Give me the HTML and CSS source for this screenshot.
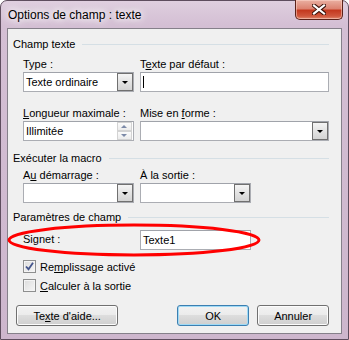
FILE: index.html
```html
<!DOCTYPE html>
<html lang="fr">

<head>
  <meta charset="UTF-8">
  <link rel="stylesheet" href="styles.css">
</head>

<body>
  <div class="window">
    <div class="titlebar">
      <span class="title">Options de champ : texte</span>
      <div class="close">
        <svg width="14" height="11" viewBox="0 0 14 11">
          <path d="M2 1.5 L12 9.5 M12 1.5 L2 9.5" stroke="#3a1008" stroke-width="4.2" stroke-linecap="square" fill="none" />
          <path d="M2 1.5 L12 9.5 M12 1.5 L2 9.5" stroke="#fff" stroke-width="2.2" stroke-linecap="square" fill="none" />
        </svg>
      </div>
    </div>

    <div class="client">
      <div class="group-head"><span>Champ texte</span></div>
      <div class="pair">
        <div class="field">
          <div class="label">Type :</div>
          <div class="combo"><span class="value">Texte ordinaire</span><span class="drop"></span></div>
        </div>
        <div class="field">
          <div class="label">T<u>e</u>xte par défaut :</div>
          <div class="input"><span class="caret"></span></div>
        </div>
      </div>

      <div class="pair pair-2">
        <div class="field">
          <div class="label"><u>L</u>ongueur maximale :</div>
          <div class="input spin-input">
            <span class="value">Illimitée</span>
            <span class="spin"><span class="spin-up"></span><span class="spin-down"></span></span>
          </div>
        </div>
        <div class="field">
          <div class="label">Mise en <u>f</u>orme :</div>
          <div class="combo"><span class="value"></span><span class="drop"></span></div>
        </div>
      </div>

      <div class="group-head group-macro"><span>Exécuter la macro</span></div>
      <div class="pair pair-3">
        <div class="field">
          <div class="label">A<u>u</u> démarrage :</div>
          <div class="combo"><span class="value"></span><span class="drop"></span></div>
        </div>
        <div class="field field-short">
          <div class="label">À la sortie :</div>
          <div class="combo"><span class="value"></span><span class="drop"></span></div>
        </div>
      </div>

      <div class="group-head group-params"><span>Paramètres de champ</span></div>
      <div class="signet-row">
        <span class="label">Signet :</span>
        <div class="input"><span class="value">Texte1</span></div>
      </div>

      <label class="check check-1">
        <span class="box">
          <svg width="11" height="11" viewBox="0 0 11 11">
            <path d="M2 5.5 L4.5 8.2 L9 1.8" stroke="#44558c" stroke-width="1.8" fill="none" />
          </svg>
        </span>
        <span>Re<u>m</u>plissage activé</span>
      </label>
      <label class="check check-2">
        <span class="box"></span>
        <span><u>C</u>alculer à la sortie</span>
      </label>

      <div class="buttons">
        <button class="btn btn-help">Te<u>x</u>te d'aide...</button>
        <button class="btn btn-default">OK</button>
        <button class="btn">Annuler</button>
      </div>
    </div>

    <svg class="mark" width="349" height="340" viewBox="0 0 349 340">
      <ellipse cx="134" cy="240" rx="125" ry="15" stroke="#f00" stroke-width="3" fill="none" />
    </svg>
  </div>
</body>

</html>
```

FILE: styles.css
```css
* {
  box-sizing: border-box;
}

body {
  margin: 0;
  padding: 0;
  color: #000;
  font-family: "Liberation Sans", Arial, sans-serif;
  font-size: 11px;
}

.window {
  position: relative;
  width: 349px;
  height: 340px;
  display: flex;
  flex-direction: column;
  padding: 0 6px 5px 6px;
  border: 1px solid #5e4d5e;
  border-radius: 7px 7px 0 0;
  background: linear-gradient(180deg, #dfcfdf 0, #d4bfd4 24px, #cdb6cd 100%);
}

.titlebar {
  height: 27px;
  display: flex;
  align-items: center;
  padding: 1px 0 0 1px;
}

.title {
  font-size: 12px;
  text-shadow: 0 0 6px #fff, 0 0 10px #fff, 0 0 14px rgba(255, 255, 255, .8);
}

.close {
  position: absolute;
  top: -1px;
  right: 5px;
  width: 48px;
  height: 20px;
  display: flex;
  align-items: center;
  justify-content: center;
  border: 1px solid #5b2219;
  border-top: none;
  border-radius: 0 0 5px 5px;
  background: linear-gradient(180deg, #eab0a2 0, #dc8371 45%, #c4391f 55%, #d0573d 85%, #e08a6f 100%);
  box-shadow: inset 0 0 0 1px rgba(255, 220, 210, .5);
}

.client {
  flex: 1;
  padding: 8px 12px 0 5px;
  background: #f0f0f0;
  border: 1px solid #85808a;
}

.group-head {
  display: flex;
  align-items: center;
  height: 14px;
  line-height: 14px;
}

.group-head::after {
  content: "";
  flex: 1;
  height: 1px;
  margin-left: 7px;
  background: #d5dfe5;
}

.group-macro {
  margin-top: 10px;
}

.group-params {
  margin-top: 7px;
}

.pair {
  display: grid;
  grid-template-columns: 111px 189px;
  column-gap: 6px;
  margin: 7px 0 0 10px;
}

.pair-2 {
  margin-top: 15px;
}

.pair-3 {
  margin-top: 4px;
}

.field-short {
  width: 111px;
}

.label {
  line-height: 13px;
  margin-bottom: 1px;
  white-space: nowrap;
}

.combo,
.input {
  position: relative;
  height: 20px;
  display: flex;
  align-items: center;
  background: #fff;
  border: 1px solid #abadb3;
  border-top-color: #a0a3aa;
}

.value {
  flex: 1;
  padding-left: 2px;
}

.drop {
  width: 16px;
  height: 18px;
  margin-right: 0;
  border: 1px solid #707070;
  background: linear-gradient(180deg, #f5f5f5 0, #e3e3e3 50%, #d4d4d4 100%);
  position: relative;
}

.drop::after {
  content: "";
  position: absolute;
  left: 4px;
  top: 7px;
  border-left: 3px solid transparent;
  border-right: 3px solid transparent;
  border-top: 3px solid #000;
}

.caret {
  width: 1px;
  height: 12px;
  margin-left: 2px;
  background: #000;
}

.spin {
  width: 15px;
  height: 18px;
  margin-right: 1px;
  display: flex;
  flex-direction: column;
}

.spin-up,
.spin-down {
  position: relative;
  flex: 1;
  border: 1px solid #d3d3d3;
  background: linear-gradient(180deg, #fbfbfb 0, #ececec 100%);
}

.spin-up::after,
.spin-down::after {
  content: "";
  position: absolute;
  left: 3px;
  top: 2px;
  border-left: 3.5px solid transparent;
  border-right: 3.5px solid transparent;
}

.spin-up::after {
  border-bottom: 3px solid #7c8aa8;
}

.spin-down::after {
  border-top: 3px solid #7c8aa8;
}

.signet-row {
  display: grid;
  grid-template-columns: 117px 111px;
  align-items: center;
  height: 20px;
  margin: 6px 0 0 10px;
}

.signet-row .value {
  padding-left: 2px;
}

.check {
  display: flex;
  align-items: center;
  gap: 4px;
  height: 15px;
  margin-left: 10px;
}

.check-1 {
  margin-top: 9px;
}

.check-2 {
  margin-top: 4px;
}

.box {
  width: 13px;
  height: 13px;
  display: flex;
  align-items: center;
  justify-content: center;
  border: 1px solid #8e8f8f;
  background: linear-gradient(135deg, #dcdcdc 0, #f6f6f6 100%);
  box-shadow: inset 0 0 0 1px #f4f4f4;
}

.buttons {
  display: flex;
  gap: 8px;
  margin: 12px 0 0 3px;
}

.btn {
  height: 21px;
  width: 73px;
  padding: 0;
  font: inherit;
  color: #000;
  border: 1px solid #707070;
  border-radius: 3px;
  background: linear-gradient(180deg, #f2f2f2 0, #ebebeb 50%, #dddddd 50%, #cfcfcf 100%);
  box-shadow: inset 0 0 0 1px #fcfcfc;
}

.btn-help {
  width: 104px;
  margin-right: 51px;
}

.btn-default {
  border-color: #3c7fb1;
  box-shadow: inset 0 0 0 1px #9fdaf6;
}

.mark {
  position: absolute;
  left: -1px;
  top: -1px;
  pointer-events: none;
}
```
